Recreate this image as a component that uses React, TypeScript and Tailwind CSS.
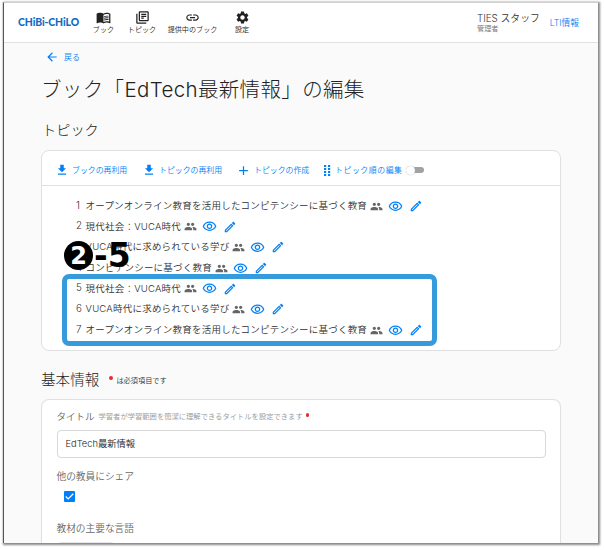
import type { ReactNode } from 'react';
import {
  MdMenuBook,
  MdOutlineLibraryBooks,
  MdLink,
  MdSettings,
  MdArrowBack,
  MdGetApp,
  MdAdd,
  MdPeople,
  MdOutlineVisibility,
  MdOutlineEdit,
} from 'react-icons/md';

const topics = [
  'オープンオンライン教育を活用したコンピテンシーに基づく教育',
  '現代社会：VUCA時代',
  'VUCA時代に求められている学び',
  'コンピテンシーに基づく教育',
  '現代社会：VUCA時代',
  'VUCA時代に求められている学び',
  'オープンオンライン教育を活用したコンピテンシーに基づく教育',
];

function NavItem({ icon, label, className }: { icon: ReactNode; label: string; className: string }) {
  return (
    <div className={`flex flex-col items-center text-[#222] ${className}`}>
      {icon}
      <span className="text-[7.1px] leading-[10px]">{label}</span>
    </div>
  );
}

function Action({ icon, label, className }: { icon: ReactNode; label: string; className: string }) {
  return (
    <div className={`flex shrink-0 items-center text-[#0080f8] ${className}`}>
      {icon}
      <span className="text-[7.9px] leading-3">{label}</span>
    </div>
  );
}

function DragDots() {
  return (
    <svg width="8" height="11" viewBox="0 0 8 11" fill="currentColor">
      {[0, 3, 6, 9].map((y) => (
        <g key={y}>
          <rect x="0" y={y} width="2.2" height="2" />
          <rect x="4" y={y} width="2.2" height="2" />
        </g>
      ))}
    </svg>
  );
}

function TopicRow({ index, title }: { index: number; title: string }) {
  return (
    <div className="flex h-[20.7px] items-center text-[#303030]">
      <span className="w-[9.5px] text-[9.8px]">{index}</span>
      <span className="text-[9.5px] tracking-[0.23px]">{title}</span>
      <MdPeople className="ml-[2.5px] size-[13px] text-[#666]" />
      <MdOutlineVisibility className="ml-[5px] size-[15px] text-[#0080f8]" />
      <MdOutlineEdit className="ml-[6px] size-[14px] text-[#0080f8]" />
    </div>
  );
}

export default function App() {
  return (
    <div className="h-[550px] w-[604px] overflow-hidden whitespace-nowrap bg-white pl-[3px] pt-[2px] font-['Inter','Noto_Sans_CJK_JP',sans-serif] font-[350]">
      <div className="relative h-[541px] w-[595px] border-l border-t border-l-[#555] border-t-[#d0d0d0] bg-[#fafafa] shadow-[1px_1px_2px_1px_#888]">
        <div className="flex h-full flex-col overflow-hidden">
          <header className="flex h-10 shrink-0 border-b border-[#e2e2e2] bg-white">
            <div className="flex w-[75px] items-center justify-end font-['Lato',sans-serif] text-[10.4px] font-black tracking-[-0.08px] text-[#106bc4]">
              CHiBi-CHiLO
            </div>
            <NavItem className="ml-[8px] w-[33px] pt-[7px]" icon={<MdMenuBook className="size-[15px]" />} label="ブック" />
            <NavItem className="w-[44px] pt-[7px]" icon={<MdOutlineLibraryBooks className="size-[15px]" />} label="トピック" />
            <NavItem className="w-[57px] pt-[7px]" icon={<MdLink className="size-[15px]" />} label="提供中のブック" />
            <NavItem className="w-[42px] pt-[7px]" icon={<MdSettings className="size-[15px]" />} label="設定" />
            <div className="ml-auto mr-[10px] pt-[9px]">
              <div className="text-[9.8px] leading-[13px] text-[#333]">TIES スタッフ</div>
              <div className="text-[7.2px] leading-[8px] text-[#777]">管理者</div>
            </div>
            <div className="mr-[19px] pt-[13px] text-[8.7px] leading-[14px] text-[#0080f8]">LTI情報</div>
          </header>

          <main className="pl-[37px]">
            <div className="flex h-[28px] items-center gap-[5px] pl-[4px] text-[#0080f8]">
              <MdArrowBack className="size-[14px]" />
              <span className="text-[8px]">戻る</span>
            </div>
            <h1 className="h-[38px] text-[20.5px] font-light leading-[38px] tracking-[0.35px] text-[#222]">
              ブック「EdTech最新情報」の編集
            </h1>
            <h2 className="h-[41px] pl-px pt-[9px] text-[14.2px] font-light leading-[24px] text-[#222]">トピック</h2>

            <section className="relative h-[201px] w-[520px] rounded-[8px] border border-[#e0e0e0] bg-white">
              <div className="flex h-[35px] items-center border-b border-[#e0e0e0] pl-[13px] pt-[4px]">
                <Action className="w-[87px] gap-[3px]" icon={<MdGetApp className="size-[14px]" />} label="ブックの再利用" />
                <Action className="w-[94px] gap-[3px]" icon={<MdGetApp className="size-[14px]" />} label="トピックの再利用" />
                <Action className="w-[88px] gap-[3px]" icon={<MdAdd className="size-[15px]" />} label="トピックの作成" />
                <Action className="gap-[3px] tracking-[0.55px]" icon={<DragDots />} label="トピック順の編集" />
                <span className="ml-[3px] flex items-center">
                  <span className="z-10 size-[9px] rounded-full bg-white shadow-[0_0_1px_#999]" />
                  <span className="-ml-[4px] h-[6px] w-[13px] rounded-full bg-[#a2a2a2]" />
                </span>
              </div>
              <div className="pl-[34px] pt-[9.7px]">
                {topics.map((title, i) => (
                  <TopicRow key={i} index={i + 1} title={title} />
                ))}
              </div>
              <div className="absolute left-[20px] top-[123px] h-[72px] w-[375px] rounded-[7px] border-[5px] border-[#359bdc]" />
              <div className="absolute left-[22px] top-[90px] flex items-center font-['DejaVu_Sans',sans-serif] font-bold text-black">
                <span className="flex size-[29px] items-center justify-center rounded-full bg-black text-[24px] leading-none text-white">
                  2
                </span>
                <span className="ml-[1px] text-[33px] leading-[29px]">-5</span>
              </div>
            </section>

            <div className="flex h-[48px] pt-[17px] leading-[24px]">
              <h2 className="text-[14.6px] font-light text-[#222]">基本情報</h2>
              <span className="ml-[10px] mt-[8px] size-[3.5px] rounded-full bg-[#e52d2d]" />
              <span className="ml-[3.5px] pt-px text-[7.2px] text-[#333]">は必須項目です</span>
            </div>

            <section className="h-[200px] w-[520px] rounded-t-[8px] border border-b-0 border-[#e0e0e0] bg-white pl-[14.5px]">
              <div className="flex h-[30px] items-center pt-[4px] text-[#666]">
                <span className="text-[9.5px]">タイトル</span>
                <span className="ml-[4px] text-[7.3px] text-[#999]">学習者が学習範囲を簡潔に理解できるタイトルを設定できます</span>
                <span className="mb-[4px] ml-[3px] size-[3.5px] rounded-full bg-[#e52d2d]" />
              </div>
              <div className="flex h-[28px] w-[489px] items-center rounded-[4px] border border-[#d8d8d8] pl-[8px] text-[9.3px] text-[#222]">
                EdTech最新情報
              </div>
              <div className="mt-[11px] text-[9.7px] leading-[16px] text-[#666]">他の教員にシェア</div>
              <div className="ml-[7px] mt-[6px] flex size-[11px] items-center justify-center rounded-[1px] bg-[#0080f8]">
                <svg width="9" height="7" viewBox="0 0 9 7" fill="none" stroke="white" strokeWidth="1.3">
                  <path d="M.7 3.5 3.2 5.9 8.3.8" />
                </svg>
              </div>
              <div className="mt-[18px] text-[9.7px] leading-[17px] text-[#666]">教材の主要な言語</div>
              <div className="mt-[5px] h-[28px] w-[58px] rounded-[4px] border border-[#e6e6e6]" />
            </section>
          </main>
        </div>
      </div>
    </div>
  );
}
